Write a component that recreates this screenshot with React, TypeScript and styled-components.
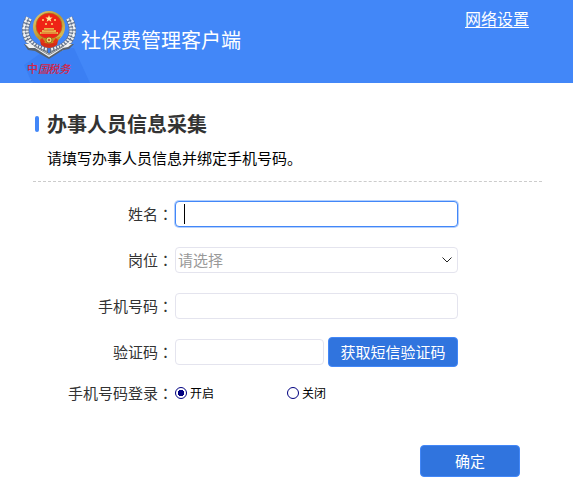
import React from "react";
import styled, { createGlobalStyle, css } from "styled-components";

const GlobalStyle = createGlobalStyle`
  * { box-sizing: border-box; }
  body {
    margin: 0;
    background: #fff;
    color: #333;
    font-family: "Noto Sans CJK SC", sans-serif;
    font-size: 15px;
    line-height: 20px;
  }
  button, input, select { font: inherit; margin: 0; }
`;

const Header = styled.header`
  display: flex;
  align-items: flex-start;
  justify-content: space-between;
  height: 83px;
  padding: 0 44px 0 20px;
  overflow: hidden;
  background: #4287f8;
`;

const Brand = styled.div`
  display: flex;
  align-items: center;
  gap: 3px;
  height: 80px;
`;

const Emblem = styled.svg`
  display: block;
  flex: none;
  width: 58px;
  height: 80px;
  overflow: visible;
`;

const EmblemText = styled.text`
  font-family: "Noto Sans CJK SC", sans-serif;
  font-size: 11px;
  font-style: italic;
  font-weight: 500;
`;

const AppTitle = styled.h1`
  margin: 0;
  color: #fff;
  font-size: 20px;
  font-weight: 400;
  line-height: 28px;
  white-space: nowrap;
`;

const HeaderLink = styled.a`
  margin-top: 7px;
  color: #fff;
  font-size: 16px;
  line-height: 22px;
  text-underline-offset: 2px;
  white-space: nowrap;
`;

const Main = styled.main`
  padding: 26px 31px 16px 33px;
`;

const Intro = styled.section`
  padding: 0 0 13px 2px;
  border-bottom: 1px dashed #ccc;
`;

const Heading = styled.h2`
  display: flex;
  align-items: center;
  gap: 8px;
  margin: 0;
  color: #333;
  font-size: 20px;
  line-height: 30px;
  &::before {
    content: "";
    width: 4px;
    height: 16px;
    border-radius: 2px;
    background: #4287f8;
  }
`;

const Hint = styled.p`
  margin: 9px 0 0 12px;
  color: #000;
`;

const Form = styled.form`
  display: flex;
  flex-direction: column;
  padding-top: 17px;
`;

const Row = styled.div`
  display: grid;
  grid-template-columns: 140px minmax(0, 283px);
  align-items: center;
  gap: 2px;
  min-height: 30px;
  margin-bottom: 16px;
`;

const ChoiceRow = styled(Row)`
  min-height: 20px;
  margin-bottom: 0;
`;

const Label = styled.label`
  text-align: right;
  white-space: nowrap;
`;

const Colon = styled.span`
  font-family: "Noto Sans CJK TC", sans-serif;
`;

const control = css`
  display: block;
  width: 100%;
  min-width: 0;
  height: 26px;
  border: 1px solid #e4e4ee;
  border-radius: 4px;
  background: #fff;
  outline: none;
`;

const TextInput = styled.input`
  ${control}
  padding: 0 8px;
  color: #333;
  &:focus {
    border-color: #4287f8;
    box-shadow: 0 0 0 1px #b4d0fd;
  }
`;

const NameInput = styled(TextInput)`
  caret-color: transparent;
  &:focus {
    background: linear-gradient(#000, #000) 8px 2px / 1px 20px no-repeat #fff;
  }
`;

const SelectBox = styled.div`
  position: relative;
`;

const Select = styled.select`
  ${control}
  appearance: none;
  padding: 0 24px 0 2px;
  color: #999;
`;

const Chevron = styled.svg`
  position: absolute;
  top: 10px;
  right: 6px;
  width: 10px;
  height: 6px;
  pointer-events: none;
`;

const CodeFields = styled.div`
  display: grid;
  grid-template-columns: minmax(0, 1fr) 130px;
  align-items: center;
  gap: 4px;
`;

const Button = styled.button<{ $tall?: boolean }>`
  height: ${(p) => (p.$tall ? 32 : 30)}px;
  padding: 0 8px;
  border: 1px solid #4287f8;
  border-radius: 4px;
  background: #3074de;
  color: #fff;
  white-space: nowrap;
`;

const Choices = styled.div`
  display: grid;
  grid-template-columns: 112px auto;
`;

const Choice = styled.label`
  display: flex;
  align-items: center;
  gap: 3px;
  color: #000;
  font-size: 12px;
`;

const Radio = styled.input`
  appearance: none;
  width: 12px;
  height: 12px;
  border: 1px solid #000080;
  border-radius: 50%;
  background: #fff;
  &:checked {
    background: radial-gradient(circle, #000080 0 3px, #fff 3px);
  }
`;

const Actions = styled.div`
  display: flex;
  justify-content: flex-end;
  padding: 42px 22px 0 0;
`;

const SubmitButton = styled(Button)`
  width: 100px;
`;

const wreath = "M9 18Q2 31 9 41Q15 49 28 51";

function Wreath() {
  return (
    <g fill="none">
      <path d={wreath} stroke="#60708c" strokeWidth="7" />
      <path d={wreath} stroke="#e9edf0" strokeWidth="6" strokeDasharray="2 1.300" />
      <path d={wreath} stroke="#647083" strokeWidth="1" strokeDasharray="2 1" />
      <path d="M7 18 5 22M5 25 3 29M4 33 5 37M8 42 12 46" stroke="#f4f6f7" strokeWidth="1.500" />
    </g>
  );
}

function TaxEmblem() {
  return (
    <Emblem viewBox="0 0 58 80" role="img" aria-label="中国税务">
      <defs>
        <linearGradient id="gold" x1="0" y1="0" x2="1" y2="1">
          <stop offset="0" stopColor="#e6d27a" />
          <stop offset=".5" stopColor="#bd962e" />
          <stop offset="1" stopColor="#e8ca62" />
        </linearGradient>
      </defs>
      <path d="M4 65 12 83H70L54 48H28Z" fill="#3b7ff3" />
      <Wreath />
      <g transform="translate(58 0) scale(-1 1)"><Wreath /></g>
      <path d="M4 44 12 44 29 53 46 44 54 44 49 49 43 50 29 59 15 51 8 50Z" fill="#59626d" />
      <path d="M5 44 11 44 29 54 47 44 52 44 48 47 43 48 29 57 15 48 9 48Z" fill="#f0f2f2" />
      <path d="m14 46 15 9 15-9" fill="none" stroke="#858b91" />
      <path d="M19 36q10 5 20 0l-2 9q-8 6-16 0Z" fill="#d42e17" />
      <circle cx="29" cy="27" r="16" fill="url(#gold)" />
      <circle cx="29" cy="26" r="13" fill="#ef2315" stroke="#a97520" strokeWidth=".7" />
      <path d="m29 15 .9 2.500h2.700l-2.100 1.700.8 2.600-2.300-1.500-2.300 1.500.8-2.600-2.100-1.700h2.700Z" fill="#fff2a0" />
      <g fill="#ffd878">
        <circle cx="23" cy="20" r="1" /><circle cx="26" cy="24" r="1" />
        <circle cx="32" cy="24" r="1" /><circle cx="35" cy="20" r="1" />
      </g>
      <path d="M20 32h2v-2h2v-2h10v2h2v2h2v2H20Z" fill="#e9b34c" />
      <path d="M21 33h16M24 30h10" stroke="#d94b1b" strokeWidth=".7" />
      <path d="M17 36q12 6 24 0l-3 5q-9 5-18 0Z" fill="#c79321" />
      <path d="m21 39 3 4m13-4-3 4" stroke="#e53418" strokeWidth="3" />
      <circle cx="29" cy="40" r="3" fill="#efd267" stroke="#8a631b" strokeWidth=".8" />
      <circle cx="29" cy="40" r="1" fill="#c82f17" />
      <EmblemText y="73" fill="#d32445">
        <tspan x="7" fontStyle="normal">中</tspan>
        <tspan x="18">国</tspan>
        <tspan x="28">税</tspan>
        <tspan x="39">务</tspan>
      </EmblemText>
    </Emblem>
  );
}

export default function App() {
  return (
    <>
      <GlobalStyle />
      <Header>
        <Brand>
          <TaxEmblem />
          <AppTitle>社保费管理客户端</AppTitle>
        </Brand>
        <HeaderLink href="#network">网络设置</HeaderLink>
      </Header>
      <Main>
        <Intro>
          <Heading>办事人员信息采集</Heading>
          <Hint>请填写办事人员信息并绑定手机号码。</Hint>
        </Intro>
        <Form onSubmit={(e) => e.preventDefault()}>
          <Row>
            <Label htmlFor="name">姓名<Colon>：</Colon></Label>
            <NameInput id="name" autoFocus autoComplete="off" />
          </Row>
          <Row>
            <Label htmlFor="post">岗位<Colon>：</Colon></Label>
            <SelectBox>
              <Select id="post" defaultValue="">
                <option value="">请选择</option>
              </Select>
              <Chevron viewBox="0 0 10 6" aria-hidden="true">
                <path d="m.5.5 4.500 4.500L9.500.5" fill="none" stroke="#222" />
              </Chevron>
            </SelectBox>
          </Row>
          <Row>
            <Label htmlFor="phone">手机号码<Colon>：</Colon></Label>
            <TextInput id="phone" type="tel" />
          </Row>
          <Row>
            <Label htmlFor="code">验证码<Colon>：</Colon></Label>
            <CodeFields>
              <TextInput id="code" inputMode="numeric" />
              <Button type="button">获取短信验证码</Button>
            </CodeFields>
          </Row>
          <ChoiceRow role="radiogroup" aria-labelledby="login-label">
            <Label as="span" id="login-label">手机号码登录<Colon>：</Colon></Label>
            <Choices>
              <Choice><Radio type="radio" name="login" value="on" defaultChecked />开启</Choice>
              <Choice><Radio type="radio" name="login" value="off" />关闭</Choice>
            </Choices>
          </ChoiceRow>
          <Actions>
            <SubmitButton $tall type="submit">确定</SubmitButton>
          </Actions>
        </Form>
      </Main>
    </>
  );
}
